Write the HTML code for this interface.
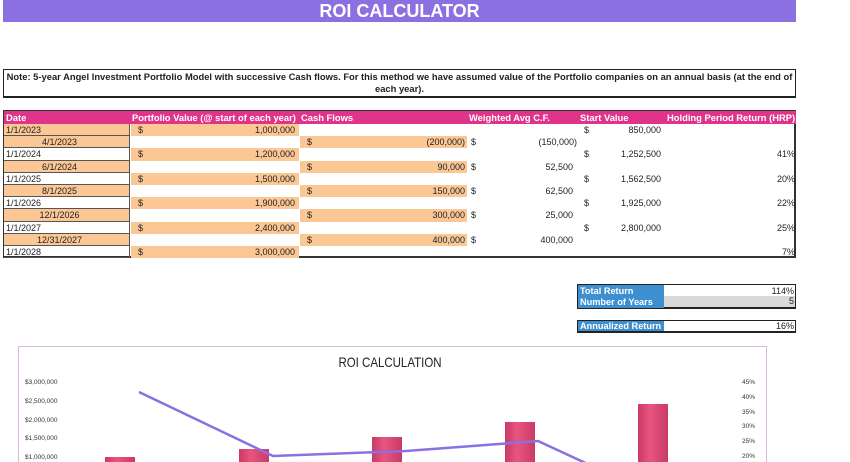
<!DOCTYPE html>
<html><head><meta charset="utf-8"><style>
*{margin:0;padding:0;box-sizing:border-box}
body{width:850px;height:462px;overflow:hidden;background:#fff;font-family:"Liberation Sans",Arial,sans-serif;position:relative;font-size:9px;color:#222}
.abs{position:absolute}
.title{left:3px;top:0;width:793px;height:22px;background:#8a70e0;color:#fff;font-weight:bold;font-size:18px;text-align:center;line-height:23px}
.note{left:3px;top:69px;width:793px;height:29px;border:1px solid #222;border-bottom:2px solid #222;font-weight:bold;font-size:9.4px;text-align:center;line-height:12px;padding-top:1px;white-space:nowrap}
.tbl{left:3px;top:110px;width:793px;height:148px;border:1px solid #333;border-bottom:2px solid #333;border-right:2px solid #333}
.hd{position:absolute;top:0;height:13px;background:#e0338a;color:#fff;font-weight:bold;font-size:9.4px;line-height:13px;padding-left:2px;white-space:nowrap}
.c{position:absolute;height:12.2px;line-height:12.2px;font-size:9px}
.or{background:#fbc794}
.sum{border:1px solid #222;border-bottom:2px solid #222}
.lbl{background:#3e8fd0;color:#fff;font-weight:bold;font-size:9.2px;padding-left:2px;position:absolute;left:0;height:12px;line-height:12px;width:86px;white-space:nowrap}
</style></head><body>
<div class="abs title">ROI CALCULATOR</div>
<div class="abs note">Note: 5-year Angel Investment Portfolio Model with successive Cash flows. For this method we have assumed value of the Portfolio companies on an annual basis (at the end of<br>each year).</div>
<div class="abs tbl" id="t">
<div class="hd" style="left:0;width:126px">Date</div>
<div class="hd" style="left:126px;width:169px">Portfolio Value (@ start of each year)</div>
<div class="hd" style="left:295px;width:168px">Cash Flows</div>
<div class="hd" style="left:463px;width:111px">Weighted Avg C.F.</div>
<div class="hd" style="left:574px;width:87px">Start Value</div>
<div class="hd" style="left:661px;width:131px">Holding Period Return (HRP)</div>
</div>
<script>
var t=document.getElementById('t');
var dates=['1/1/2023','4/1/2023','1/1/2024','6/1/2024','1/1/2025','8/1/2025','1/1/2026','12/1/2026','1/1/2027','12/31/2027','1/1/2028'];
var pv=['1,000,000','','1,200,000','','1,500,000','','1,900,000','','2,400,000','','3,000,000'];
var cf=['','(200,000)','','90,000','','150,000','','300,000','','400,000',''];
var wa=['','(150,000)','','52,500','','62,500','','25,000','','400,000',''];
var sv=['850,000','','1,252,500','','1,562,500','','1,925,000','','2,800,000','',''];
var hr=['','','41%','','20%','','22%','','25%','','7%'];
var h='';
for(var i=0;i<11;i++){
 var y=13+i*12.2;
 var dOr=(i==0||i%2==1);
 h+='<div class="c'+(dOr?' or':'')+'" style="left:0;top:'+y+'px;width:126px;border-bottom:1px solid #555;border-right:1px solid #555;'+(i%2==1?'text-align:center;padding-right:14px':'padding-left:2px')+'">'+dates[i]+'</div>';
 if(i%2==0) h+='<div class="c or" style="left:127px;top:'+y+'px;width:168px"><span style="position:absolute;left:7px">$</span><span style="position:absolute;right:4px">'+pv[i]+'</span></div>';
 else h+='<div class="c or" style="left:296px;top:'+y+'px;width:167px"><span style="position:absolute;left:7px">$</span><span style="position:absolute;right:2px">'+cf[i]+'</span></div><div class="c" style="left:463px;top:'+y+'px;width:110px"><span style="position:absolute;left:4px">$</span><span style="position:absolute;right:'+(wa[i][0]=='('?0:4)+'px">'+wa[i]+'</span></div>';
 if(sv[i]) h+='<div class="c" style="left:574px;top:'+y+'px;width:87px"><span style="position:absolute;left:6px">$</span><span style="position:absolute;right:4px">'+sv[i]+'</span></div>';
 if(hr[i]) h+='<div class="c" style="left:661px;top:'+y+'px;width:131px;text-align:right;padding-right:1px">'+hr[i]+'</div>';
}
t.insertAdjacentHTML('beforeend',h);
</script>
<div class="abs sum" style="left:577px;top:284px;width:219px;height:25px">
<div class="lbl" style="top:0">Total Return</div><div class="abs" style="left:86px;top:0;right:1px;height:12px;line-height:12px;text-align:right">114%</div>
<div class="lbl" style="top:11px">Number of Years</div><div class="abs" style="left:86px;top:11px;right:0;height:11px;line-height:11px;text-align:right;background:#d9d9d9;padding-right:1px">5</div>
</div>
<div class="abs sum" style="left:577px;top:320px;width:219px;height:13px">
<div class="lbl" style="top:0;height:10px;line-height:10px">Annualized Return</div><div class="abs" style="left:86px;top:0;right:1px;height:10px;line-height:10px;text-align:right">16%</div>
</div>
<svg class="abs" style="left:0;top:0" width="850" height="462">
<defs><linearGradient id="g" x1="0" x2="1"><stop offset="0" stop-color="#c93a68"/><stop offset=".4" stop-color="#e8557f"/><stop offset="1" stop-color="#c93a68"/></linearGradient></defs>
<rect x="18.5" y="346.5" width="748" height="130" fill="#fff" stroke="#d8b8dc"/>
<text x="390" y="367" font-family="Liberation Sans,sans-serif" font-size="14" text-anchor="middle" fill="#222" transform="translate(390 0) scale(0.82 1) translate(-390 0)">ROI CALCULATION</text>
<g font-size="6.5" fill="#333" font-family="Liberation Sans,sans-serif">
<text x="25" y="384">$3,000,000</text><text x="25" y="403">$2,500,000</text><text x="25" y="422">$2,000,000</text><text x="25" y="440">$1,500,000</text><text x="25" y="459">$1,000,000</text>
<text x="742" y="384">45%</text><text x="742" y="399">40%</text><text x="742" y="414">35%</text><text x="742" y="428">30%</text><text x="742" y="443">25%</text><text x="742" y="458">20%</text>
</g>
<rect x="105" y="457" width="30" height="10" fill="url(#g)"/>
<rect x="239" y="449" width="30" height="20" fill="url(#g)"/>
<rect x="372" y="437" width="30" height="30" fill="url(#g)"/>
<rect x="505" y="422" width="30" height="50" fill="url(#g)"/>
<rect x="638" y="404" width="30" height="70" fill="url(#g)"/>
<polyline points="139,392 273,456 406,451 538,441 592,466" fill="none" stroke="#8a70e0" stroke-width="2.5"/>
</svg>
</body></html>
